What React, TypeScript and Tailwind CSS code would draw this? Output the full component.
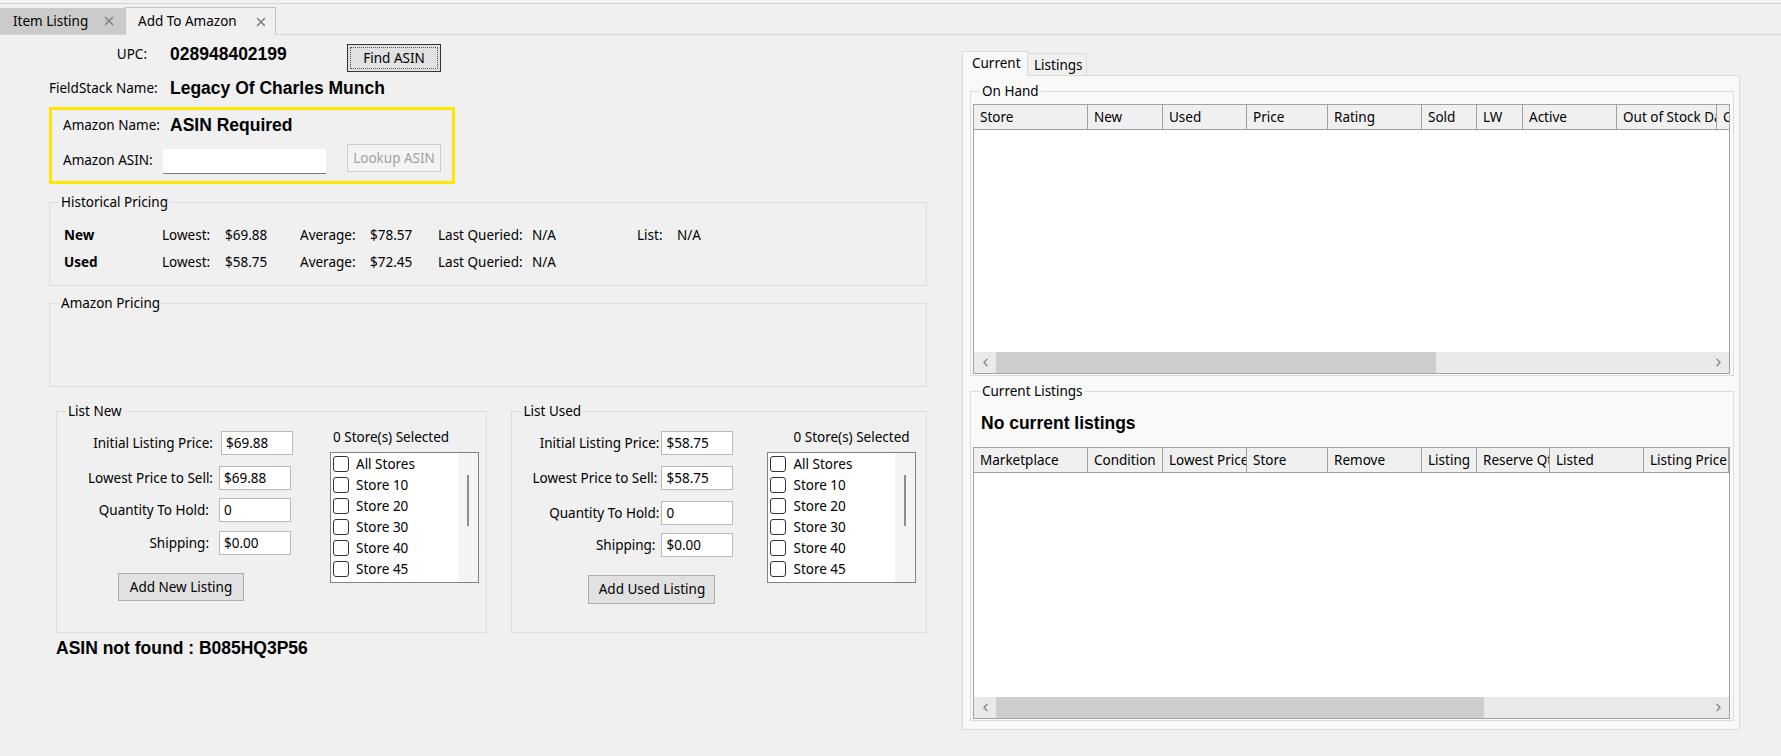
import { X, ChevronLeft, ChevronRight } from "lucide-react";

const stores = ["All Stores", "Store 10", "Store 20", "Store 30", "Store 40", "Store 45"];

const onHandCols = [
  { label: "Store", w: "w-[114px]" },
  { label: "New", w: "w-[75px]" },
  { label: "Used", w: "w-[84px]" },
  { label: "Price", w: "w-[81px]" },
  { label: "Rating", w: "w-[94px]" },
  { label: "Sold", w: "w-[55px]" },
  { label: "LW", w: "w-[46px]" },
  { label: "Active", w: "w-[94px]" },
  { label: "Out of Stock Date", w: "w-[100px]" },
  { label: "Condition", w: "w-[60px]" },
];

const listingCols = [
  { label: "Marketplace", w: "w-[114px]" },
  { label: "Condition", w: "w-[75px]" },
  { label: "Lowest Price", w: "w-[84px]" },
  { label: "Store", w: "w-[81px]" },
  { label: "Remove", w: "w-[94px]" },
  { label: "Listing", w: "w-[55px]" },
  { label: "Reserve Qty", w: "w-[73px]" },
  { label: "Listed", w: "w-[94px]" },
  { label: "Listing Price", w: "w-[85px]" },
];

function Group({
  legend,
  className,
  children,
}: {
  legend: string;
  className: string;
  children?: React.ReactNode;
}) {
  return (
    <fieldset className={`min-w-0 border border-[#dcdcdc] ${className}`}>
      <legend className="ml-[9px] px-[2px] leading-[16px]">{legend}</legend>
      {children}
    </fieldset>
  );
}

function StoreList() {
  return (
    <div className="flex h-[131px] w-[149px] border border-[#828282] bg-white">
      <div className="flex-1 pl-[2px]">
        {stores.map((s) => (
          <div key={s} className="flex h-[21px] items-center gap-[7px]">
            <span className="h-[16px] w-[16px] rounded-[3px] border border-[#333333] bg-white" />
            <span className="leading-[18px]">{s}</span>
          </div>
        ))}
      </div>
      <div className="flex w-[20px] justify-center bg-[#f4f4f4] pt-[22px]">
        <div className="h-[51px] w-[2px] bg-[#8c8c8c]" />
      </div>
    </div>
  );
}

function PriceRow({
  label,
  value,
  labelW,
  gap,
  mt,
}: {
  label: string;
  value: string;
  labelW: string;
  gap: string;
  mt: string;
}) {
  return (
    <div className={`flex items-center ${mt}`}>
      <span className={`${labelW} text-right whitespace-nowrap`}>{label}</span>
      <div
        className={`${gap} h-[24px] w-[72px] border border-[#b9b9b9] bg-white pl-[4px] leading-[22px]`}
      >
        {value}
      </div>
    </div>
  );
}

function HScroll({ thumb }: { thumb: string }) {
  return (
    <div className="flex h-[21px] bg-[#e9e9e9]">
      <div className="flex w-[22px] items-center justify-center text-[#808080]">
        <ChevronLeft size={13} strokeWidth={2} />
      </div>
      <div className={`${thumb} bg-[#cdcdcd]`} />
      <div className="flex-1" />
      <div className="flex w-[22px] items-center justify-center text-[#808080]">
        <ChevronRight size={13} strokeWidth={2} />
      </div>
    </div>
  );
}

function DataGrid({
  cols,
  bodyH,
  thumb,
  className,
}: {
  cols: { label: string; w: string }[];
  bodyH: string;
  thumb: string;
  className: string;
}) {
  return (
    <div className={`w-[757px] overflow-hidden border border-[#a3a3a3] bg-white ${className}`}>
      <div className="flex h-[25px] border-b border-[#a0a0a0] bg-[#f0f0f0]">
        {cols.map((c) => (
          <div
            key={c.label}
            className={`${c.w} shrink-0 overflow-hidden whitespace-nowrap border-r border-[#a0a0a0] pl-[6px] leading-[24px]`}
          >
            {c.label}
          </div>
        ))}
      </div>
      <div className={`${bodyH} bg-white`} />
      <HScroll thumb={thumb} />
    </div>
  );
}

export default function App() {
  return (
    <div className="h-[756px] w-[1781px] overflow-hidden bg-[#f0f0f0] font-['Noto_Sans',sans-serif] text-[13.5px] text-black">
      {/* Document tabs */}
      <div className="h-[35px] pt-[3px]">
        <div className="flex h-[32px] items-end border-y border-[#d4d4d4]">
          <div className="flex h-[26px] w-[125px] items-center bg-[#cbcbcb] pl-[13px]">
            <span className="w-[89px]">Item Listing</span>
            <X size={14} strokeWidth={2.5} className="text-[#7d7d7d]" />
          </div>
          <div className="relative -mb-px flex h-[28px] w-[151px] items-center border border-b-0 border-[#c5c5c5] bg-[#f0f0f0] pl-[12px]">
            <span className="w-[116px]">Add To Amazon</span>
            <X size={14} strokeWidth={2.5} className="text-[#7d7d7d]" />
          </div>
        </div>
      </div>

      <div className="flex items-start">
        {/* Left column */}
        <div className="ml-[49px] mt-[9px] w-[878px]">
          <div className="flex items-start">
            <span className="w-[98px] text-right leading-[20px]">UPC:</span>
            <span className="ml-[23px] w-[177px] font-['Liberation_Sans',Arial,sans-serif] text-[17.5px] font-bold leading-[20px]">
              028948402199
            </span>
            <button className="h-[28px] w-[94px] border border-[#333333] bg-[#e1e1e1] p-[2px]">
              <span className="flex h-full w-full items-center justify-center border border-dotted border-[#555555]">
                Find ASIN
              </span>
            </button>
          </div>

          <div className="mt-[6px] flex items-center">
            <span className="w-[108px] whitespace-nowrap text-right leading-[20px]">FieldStack Name:</span>
            <span className="ml-[13px] font-['Liberation_Sans',Arial,sans-serif] text-[17.5px] font-bold leading-[20px]">
              Legacy Of Charles Munch
            </span>
          </div>

          <div className="mt-[9px] h-[77px] w-[406px] border-[3px] border-[#ffe500] pl-[11px] pt-[5px]">
            <div className="flex items-center">
              <span className="w-[107px] leading-[20px]">Amazon Name:</span>
              <span className="font-['Liberation_Sans',Arial,sans-serif] text-[17.5px] font-bold leading-[20px]">
                ASIN Required
              </span>
            </div>
            <div className="mt-[9px] flex h-[30px] items-start">
              <span className="mt-[6px] w-[100px] leading-[20px]">Amazon ASIN:</span>
              <div className="mt-[5px] h-[25px] w-[163px] border-b border-[#7a7a7a] bg-white" />
              <button className="ml-[21px] h-[28px] w-[94px] border border-[#cccccc] bg-[#f4f4f4] text-[#a2a2a2]">
                Lookup ASIN
              </button>
            </div>
          </div>

          <Group legend="Historical Pricing" className="mt-[10px] w-[878px] pb-[13px]">
            <div className="mt-[15px] flex pl-[14px] leading-[20px]">
              <span className="w-[98px] font-bold">New</span>
              <span className="w-[63px]">Lowest:</span>
              <span className="w-[75px]">$69.88</span>
              <span className="w-[70px]">Average:</span>
              <span className="w-[68px]">$78.57</span>
              <span className="w-[94px]">Last Queried:</span>
              <span className="w-[105px]">N/A</span>
              <span className="w-[40px]">List:</span>
              <span>N/A</span>
            </div>
            <div className="mt-[7px] flex pl-[14px] leading-[20px]">
              <span className="w-[98px] font-bold">Used</span>
              <span className="w-[63px]">Lowest:</span>
              <span className="w-[75px]">$58.75</span>
              <span className="w-[70px]">Average:</span>
              <span className="w-[68px]">$72.45</span>
              <span className="w-[94px]">Last Queried:</span>
              <span>N/A</span>
            </div>
          </Group>

          <Group legend="Amazon Pricing" className="mt-[9px] h-[92px] w-[878px]" />

          <div className="mt-[16px] flex">
            <Group legend="List New" className="ml-[7px] flex h-[230px] w-[432px]">
              <div className="flex">
                <div className="w-[273px]">
                  <PriceRow label="Initial Listing Price:" value="$69.88" labelW="w-[156px]" gap="ml-[8px]" mt="mt-[12px]" />
                  <PriceRow label="Lowest Price to Sell:" value="$69.88" labelW="w-[156px]" gap="ml-[6px]" mt="mt-[11px]" />
                  <PriceRow label="Quantity To Hold:" value="0" labelW="w-[152px]" gap="ml-[10px]" mt="mt-[8px]" />
                  <PriceRow label="Shipping:" value="$0.00" labelW="w-[152px]" gap="ml-[10px]" mt="mt-[9px]" />
                  <button className="ml-[61px] mt-[18px] h-[28px] w-[126px] border border-[#adadad] bg-[#e1e1e1]">
                    Add New Listing
                  </button>
                </div>
                <div className="w-[149px]">
                  <div className="mt-[8px] whitespace-nowrap pl-[3px] leading-[20px]">0 Store(s) Selected</div>
                  <div className="mt-[5px]">
                    <StoreList />
                  </div>
                </div>
              </div>
            </Group>

            <Group legend="List Used" className="ml-[24px] h-[230px] w-[416px]">
              <div className="flex">
                <div className="w-[255px]">
                  <PriceRow label="Initial Listing Price:" value="$58.75" labelW="w-[147px]" gap="ml-[2px]" mt="mt-[12px]" />
                  <PriceRow label="Lowest Price to Sell:" value="$58.75" labelW="w-[145px]" gap="ml-[4px]" mt="mt-[11px]" />
                  <PriceRow label="Quantity To Hold:" value="0" labelW="w-[147px]" gap="ml-[2px]" mt="mt-[11px]" />
                  <PriceRow label="Shipping:" value="$0.00" labelW="w-[143px]" gap="ml-[6px]" mt="mt-[8px]" />
                  <button className="ml-[76px] mt-[18px] h-[29px] w-[127px] border border-[#adadad] bg-[#e1e1e1]">
                    Add Used Listing
                  </button>
                </div>
                <div className="w-[149px]">
                  <div className="mt-[8px] whitespace-nowrap pl-[26px] leading-[20px]">0 Store(s) Selected</div>
                  <div className="mt-[5px]">
                    <StoreList />
                  </div>
                </div>
              </div>
            </Group>
          </div>

          <div className="ml-[7px] mt-[5px] font-['Liberation_Sans',Arial,sans-serif] text-[17.5px] font-bold leading-[20px]">
            ASIN not found : B085HQ3P56
          </div>
        </div>

        {/* Right panel */}
        <div className="ml-[35px] mt-[16px] w-[778px]">
          <div className="flex h-[24px] items-end">
            <div className="relative -mb-px h-[25px] w-[66px] border border-b-0 border-[#dadada] bg-[#f9f9f9] pl-[9px] leading-[23px]">
              Current
            </div>
            <div className="h-[22px] w-[59px] border border-b-0 border-l-0 border-[#dadada] bg-[#f0f0f0] pl-[6px] leading-[23px]">
              Listings
            </div>
          </div>
          <div className="h-[655px] border border-[#dadada] bg-[#f9f9f9]">
            <Group legend="On Hand" className="ml-[7px] mt-[7px] w-[764px] pb-[1px]">
              <DataGrid cols={onHandCols} bodyH="h-[222px]" thumb="w-[440px]" className="ml-[2px] mt-[5px]" />
            </Group>
            <Group legend="Current Listings" className="ml-[7px] mt-[7px] w-[764px] pb-[1px]">
              <div className="ml-[10px] mt-[14px] font-['Liberation_Sans',Arial,sans-serif] text-[17.5px] font-bold leading-[20px]">
                No current listings
              </div>
              <DataGrid cols={listingCols} bodyH="h-[224px]" thumb="w-[488px]" className="ml-[2px] mt-[14px]" />
            </Group>
          </div>
        </div>
      </div>
    </div>
  );
}
